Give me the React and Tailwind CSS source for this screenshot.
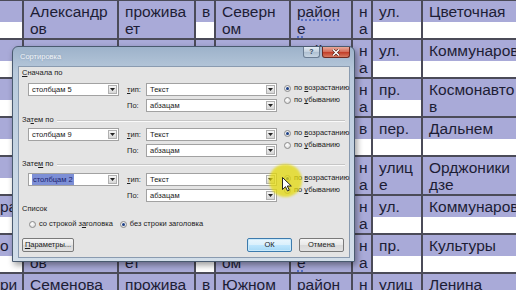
import React from "react";

// Строки таблицы документа: "строка1|строка2" для каждой ячейки
const rows = [
  ["", "Александр|ов", "прожива|ет", "в", "Северн|ом", "район|е", "н|а", "ул.", "Цветочная"],
  ["", "Петров", "прожива|ет", "в", "Южном", "район|е", "н|а", "ул.", "Коммунаров"],
  ["", "Иванов", "прожива|ет", "в", "Северн|ом", "район|е", "н|а", "пр.", "Космонавто|в"],
  ["", "Сидоров", "прожива|ет", "в", "Южном", "район|е", "в", "пер.", "Дальнем"],
  ["", "Кузнецов", "прожива|ет", "в", "Северн|ом", "район|е", "н|а", "улиц|е", "Орджоники|дзе"],
  ["ра", "Петров", "прожива|ет", "в", "Южном", "район|е", "н|а", "ул.", "Коммунаров"],
  ["о", "Александр|ов", "прожива|ет", "в", "Северн|ом", "район|е", "н|а", "пр.", "Культуры"],
  ["ри", "Семенова", "прожива|ет", "в", "Южном", "район|е", "н|а", "улиц|е", "Ленина"],
];

const TableCell = ({ text, col }) => {
  const [a, b = ""] = text.split("|");
  const wavy = text.startsWith("район");
  const line = wavy ? "underline decoration-dotted decoration-[#3f5fc0] underline-offset-[3px]" : "";
  const pad = col === 0 ? "pl-0" : "pl-[6px]";
  return (
    <div className="flex flex-col bg-white">
      <div className={`h-[21px] whitespace-nowrap leading-[21px] ${pad} ${a || col === 0 ? "bg-[#a9aad8]" : ""}`}>
        <span className={line}>{a}</span>
      </div>
      <div className={`h-[16px] whitespace-nowrap leading-[14px] ${pad} ${b ? "bg-[#a9aad8]" : ""}`}>
        <span className={line}>{b}</span>
      </div>
    </div>
  );
};

const Combo = ({ w, text, selected }) => (
  <div className={`flex h-[13px] items-stretch border border-[#a2a2a2] bg-white ${w}`}>
    <div className="flex flex-1 items-center overflow-hidden whitespace-nowrap pl-[3px]">
      <span className={selected ? "bg-[#7d8fd6] px-px text-[#1b2470]" : ""}>{text}</span>
    </div>
    <div className="my-px mr-px flex w-[9px] items-center justify-center border border-[#b0b0b0] bg-[linear-gradient(#f6f6f6,#d6d6d6)]">
      <svg width="5" height="3" viewBox="0 0 5 3">
        <path d="M0 0h5L2.5 3z" fill="#222" />
      </svg>
    </div>
  </div>
);

const Radio = ({ on, children }) => (
  <div className="flex h-[10px] items-center gap-[3px] whitespace-nowrap">
    <span className="flex h-[7px] w-[7px] items-center justify-center rounded-full border border-[#8c8c8c] bg-[radial-gradient(circle_at_40%_35%,#ffffff,#d4d4d4)]">
      {on && <span className="h-[3px] w-[3px] rounded-full bg-[#1c3f86]" />}
    </span>
    <span>{children}</span>
  </div>
);

const GroupLabel = ({ children, line }) => (
  <div className="flex h-[10px] items-center pl-[3px]">
    <span className="whitespace-nowrap">{children}</span>
    {line && <div className="ml-[3px] mr-[4px] flex-1 border-t border-[#c6c6c6] shadow-[0_1px_0_#fafafa]" />}
  </div>
);

const SortGroup = ({ column, selected }) => (
  <div className="flex">
    <div className="flex flex-col gap-[3px]">
      <div className="flex items-center">
        <div className="ml-[9px]">
          <Combo w="w-[91px]" text={column} selected={selected} />
        </div>
        <span className="ml-[8px] w-[19px]"><u>т</u>ип:</span>
        <Combo w="w-[131px]" text="Текст" />
      </div>
      <div className="flex items-center">
        <span className="ml-[108px] w-[19px]">По:</span>
        <Combo w="w-[131px]" text="абзацам" />
      </div>
    </div>
    <div className="ml-[7px] flex flex-col gap-[2px]">
      <Radio on>по <u>в</u>озрастанию</Radio>
      <Radio>по <u>у</u>быванию</Radio>
    </div>
  </div>
);

const WinButton = ({ children, def, w }) => (
  <button
    className={`flex h-[14px] items-center justify-center rounded-[2px] border text-[7.5px] text-[#1a1a1a] ${w} ${
      def
        ? "border-[#3d7bad] bg-[linear-gradient(#eaf6fd,#d9f0fc_50%,#bee6fd_51%,#a7d9f5)] shadow-[inset_0_0_0_1px_#c9e9fb]"
        : "border-[#7a7a7a] bg-[linear-gradient(#f6f6f6,#e8e8e8_50%,#d8d8d8_51%,#e2e2e2)]"
    }`}
  >
    {children}
  </button>
);

const SortDialog = () => (
  <div className="absolute left-[12px] top-[46px] flex h-[216px] w-[343px] flex-col rounded-t-[6px] border border-[#4a5b70] bg-[linear-gradient(180deg,#9db2ca_0%,#b9cadc_12%,#c9d7e5_60%,#d2dee9_100%)] shadow-[2px_3px_6px_rgba(0,0,0,0.4)]">
    {/* заголовок окна */}
    <div className="flex h-[19px] items-start">
      <span className="ml-[7px] mt-[4px] text-[7.5px] text-[#f3f6fa] [text-shadow:0_0_2px_#7f94ad]">Сортировка</span>
      <div className="ml-auto mr-[4px] flex gap-[2px]">
        <div className="flex h-[11px] w-[17px] items-center justify-center rounded-b-[3px] border border-t-0 border-[#6b7d93] bg-[linear-gradient(#e4ecf4,#c1cfdd_50%,#aebfd1_51%,#c8d6e4)] text-[7px] font-bold text-[#34465c]">
          ?
        </div>
        <div className="flex h-[11px] w-[28px] items-center justify-center rounded-b-[3px] border border-t-0 border-[#6e2a22] bg-[linear-gradient(#e9a99b,#d4705e_45%,#c3402b_55%,#d67b63)]">
          <svg width="8" height="7" viewBox="0 0 8 7">
            <path d="M1 0.5l6 6M7 0.5l-6 6" stroke="#4a1810" strokeWidth="2.6" />
            <path d="M1 0.5l6 6M7 0.5l-6 6" stroke="#fff" strokeWidth="1.5" />
          </svg>
        </div>
      </div>
    </div>

    {/* содержимое */}
    <div className="ml-[5px] mr-[4px] flex h-[192px] flex-col border border-[#8a9bb0] bg-[#e4e4e4] text-[7.5px] text-[#202020]">
      <div className="mt-[1px]">
        <GroupLabel><u>С</u>начала по</GroupLabel>
      </div>
      <div className="mt-[5px]">
        <SortGroup column="столбцам 5" />
      </div>
      <div className="mt-[3px]">
        <GroupLabel line>За<u>т</u>ем по</GroupLabel>
      </div>
      <div className="mt-[3px]">
        <SortGroup column="столбцам 9" />
      </div>
      <div className="mt-[2px]">
        <GroupLabel line>Зате<u>м</u> по</GroupLabel>
      </div>
      <div className="mt-[4px]">
        <SortGroup column="столбцам 2" selected />
      </div>
      <div className="mt-[2px]">
        <GroupLabel>Список</GroupLabel>
      </div>
      <div className="ml-[10px] mt-[5px] flex gap-[7px]">
        <Radio>со строкой з<u>а</u>головка</Radio>
        <Radio on>без строки заголовка</Radio>
      </div>
      <div className="mt-[9px] flex items-center">
        <div className="ml-[3px]">
          <WinButton w="w-[52px]"><u>П</u>араметры...</WinButton>
        </div>
        <div className="ml-auto flex gap-[7px] pr-[5px]">
          <WinButton w="w-[45px]" def>ОК</WinButton>
          <WinButton w="w-[45px]">Отмена</WinButton>
        </div>
      </div>
    </div>
  </div>
);

export default function App() {
  return (
    <div className="relative h-[290px] w-[516px] overflow-hidden bg-white font-['Liberation_Sans',Arial,sans-serif]">
      {/* таблица документа Word */}
      <div className="grid grid-cols-[22px_93px_75px_18px_73px_60px_18px_48px_93px] gap-[2px] bg-[#4b4b58] pt-[1px] text-[15.5px] text-[#1d1d35]">
        {rows.map((row, r) =>
          row.map((cell, c) => <TableCell key={`${r}-${c}`} text={cell} col={c} />)
        )}
      </div>

      <SortDialog />

      {/* подсветка курсора */}
      <div className="absolute left-[269px] top-[164px] h-[33px] w-[33px] rounded-full bg-[#e4d90c]/75 blur-[1px]" />
      <svg className="absolute left-[282px] top-[177px]" width="10" height="15" viewBox="0 0 10 15">
        <path d="M0.5 0.5v12l3-2.8 2 4.3 1.8-.8-2-4.2h4z" fill="#fff" stroke="#111" strokeWidth="0.9" strokeLinejoin="round" />
      </svg>
    </div>
  );
}
